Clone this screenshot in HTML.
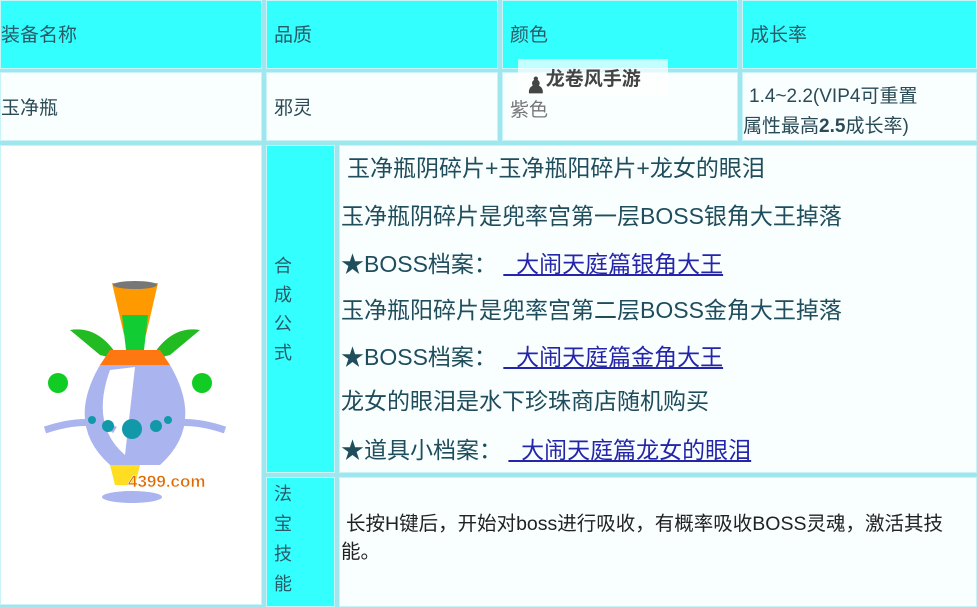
<!DOCTYPE html>
<html><head><meta charset="utf-8"><style>
body{margin:0;width:977px;height:597px;overflow:hidden;background:#9fe6ef;font-family:"Liberation Sans","Noto Sans CJK SC",sans-serif;position:relative}
.c{position:absolute;box-sizing:border-box;border:1px solid #c8f4f8}
.h{background:#33ffff;color:#2a5a66;font-size:19px}
.w{background:#f9feff;color:#2a4a55;font-size:19px}
.t{position:absolute;white-space:nowrap}
.r{position:absolute;left:341px;font-size:23px;line-height:26px;color:#1f4d5c;white-space:nowrap}
a{color:#2525aa;text-decoration:underline}
</style></head><body>
<div class="c h" style="left:0;top:0;width:262px;height:69px"><span class="t" style="left:0;top:19px">装备名称</span></div>
<div class="c h" style="left:266px;top:0;width:232px;height:69px"><span class="t" style="left:7px;top:19px">品质</span></div>
<div class="c h" style="left:502px;top:0;width:236px;height:69px"><span class="t" style="left:7px;top:19px">颜色</span></div>
<div class="c h" style="left:742px;top:0;width:235px;height:69px"><span class="t" style="left:7px;top:19px">成长率</span></div>
<div class="c w" style="left:0;top:72px;width:262px;height:69px"><span class="t" style="left:0;top:20px">玉净瓶</span></div>
<div class="c w" style="left:266px;top:72px;width:232px;height:69px"><span class="t" style="left:7px;top:20px">邪灵</span></div>
<div class="c w" style="left:502px;top:72px;width:236px;height:69px"><span class="t" style="left:7px;top:22px;color:#777">紫色</span></div>
<div class="c w" style="left:742px;top:72px;width:235px;height:69px"><span class="t" style="left:6px;top:8px;font-size:19px">1.4~2.2(VIP4可重置</span><span class="t" style="left:0;top:38px;font-size:19px">属性最高<b>2.5</b>成长率)</span></div>
<div style="position:absolute;left:518px;top:59px;width:150px;height:37px;background:rgba(255,255,255,.7)"></div>
<div class="t" style="left:526px;top:64px;font-size:19px;font-weight:bold;color:#444"><span style="font-size:22px;position:relative;top:8px">♟</span>龙卷风手游</div>
<div class="c" style="left:0;top:145px;width:262px;height:460px;background:#fff"></div>
<div class="c" style="left:266px;top:145px;width:69px;height:328px;background:#33ffff"></div>
<div class="c" style="left:339px;top:145px;width:638px;height:328px;background:#f9feff"></div>
<div class="c" style="left:266px;top:477px;width:69px;height:130px;background:#33ffff"></div>
<div class="c" style="left:339px;top:477px;width:638px;height:130px;background:#f9feff"></div>
<div class="t" style="left:274px;top:252px;font-size:18px;line-height:29px;color:#2a5a66;white-space:normal;width:20px">合成公式</div>
<div class="t" style="left:274px;top:479px;font-size:18px;line-height:30px;color:#2a5a66;white-space:normal;width:20px">法宝技能</div>
<div class="r" style="top:155px;left:347px">玉净瓶阴碎片+玉净瓶阳碎片+龙女的眼泪</div>
<div class="r" style="top:203px">玉净瓶阴碎片是兜率宫第一层BOSS银角大王掉落</div>
<div class="r" style="top:251px">★BOSS档案： <a>&nbsp;&nbsp;大闹天庭篇银角大王</a></div>
<div class="r" style="top:297px">玉净瓶阳碎片是兜率宫第二层BOSS金角大王掉落</div>
<div class="r" style="top:344px">★BOSS档案： <a>&nbsp;&nbsp;大闹天庭篇金角大王</a></div>
<div class="r" style="top:388px">龙女的眼泪是水下珍珠商店随机购买</div>
<div class="r" style="top:437px">★道具小档案： <a>&nbsp;&nbsp;大闹天庭篇龙女的眼泪</a></div>
<div class="r" style="top:511px;left:346px;font-size:19.5px;color:#222">长按H键后，开始对boss进行吸收，有概率吸收BOSS灵魂，激活其技</div>
<div class="r" style="top:539px;font-size:19.5px;color:#222">能。</div>
<svg style="position:absolute;left:40px;top:275px" width="190" height="235" viewBox="0 0 190 235">
<path d="M72 8 L118 8 L106 60 L84 60Z" fill="#ff9900"/>
<ellipse cx="95" cy="10" rx="22" ry="4" fill="#777"/>
<path d="M82 40 L108 40 L104 75 L86 75Z" fill="#11cc33"/>
<path d="M30 55 Q60 50 80 85 L60 80Z M160 55 Q130 50 110 85 L130 80Z" fill="#22bb22"/>
<path d="M70 75 L120 75 L130 90 L60 90Z" fill="#ff7711"/>
<path d="M60 90 L130 90 Q165 150 120 190 L70 190 Q25 150 60 90Z" fill="#aab4ee"/>
<path d="M70 95 L95 92 L85 180 Q50 150 70 95Z" fill="#fff"/>
<path d="M5 155 Q50 140 75 155 M185 155 Q140 140 115 155" stroke="#aab4ee" stroke-width="7" fill="none"/>
<circle cx="18" cy="108" r="10" fill="#11cc22"/><circle cx="162" cy="108" r="10" fill="#11cc22"/>
<g fill="#1199aa"><circle cx="92" cy="154" r="10"/><circle cx="68" cy="151" r="6"/><circle cx="116" cy="151" r="6"/><circle cx="52" cy="145" r="4"/><circle cx="128" cy="145" r="4"/></g>
<path d="M70 190 L100 190 L95 210 L75 210Z" fill="#ffdd22"/>
<ellipse cx="92" cy="222" rx="30" ry="6" fill="#aab4ee"/>
<text x="88" y="212" font-family="Liberation Sans" font-weight="bold" font-size="17" fill="#e06a00" stroke="#fff" stroke-width=".5">4399.com</text>
</svg>
</body></html>
